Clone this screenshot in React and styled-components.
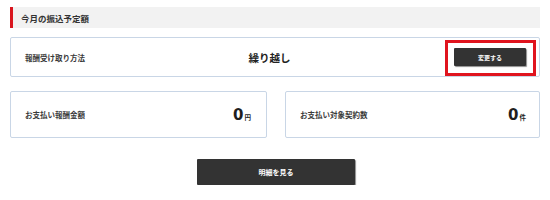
import React from "react";
import styled, { createGlobalStyle } from "styled-components";

const Global = createGlobalStyle`
  html, body { margin: 0; padding: 0; background: #fff; }
  body { font-family: "Noto Sans CJK JP", "Noto Sans", sans-serif; color: #333; }
`;

const Page = styled.div`
  width: 530px;
  padding: 7px 10px 0;
  display: flex;
  flex-direction: column;
`;

const Heading = styled.h2`
  margin: 0;
  height: 21px;
  box-sizing: border-box;
  display: flex;
  align-items: center;
  background: #f2f2f2;
  border-left: 3px solid #d9161f;
  padding-left: 8px;
  font-size: 8.5px;
  font-weight: 700;
  color: #333;
`;

const Card = styled.div`
  box-sizing: border-box;
  border: 1px solid #c9d6e6;
  border-radius: 2px;
  background: #fff;
  height: ${(p) => p.$h}px;
  display: flex;
  align-items: center;
  padding: 0 ${(p) => p.$pr || 13}px 0 14px;
  position: relative;
`;

const MethodCard = styled(Card)`
  margin-top: 9px;
  display: grid;
  grid-template-columns: 1fr auto 1fr;
`;

const Label = styled.span`
  font-size: 7.5px;
  font-weight: 700;
  color: #3a3a3a;
  flex: 1;
`;

const Value = styled.span`
  font-size: 10.5px;
  font-weight: 700;
  color: #222;
  margin-right: 12px;
`;

const ButtonCell = styled.div`
  display: flex;
  justify-content: flex-end;
`;

const Highlight = styled.div`
  position: absolute;
  right: 3px;
  top: 2px;
  width: 91px;
  height: 36px;
  box-sizing: border-box;
  border: 3.5px solid #e0141e;
  pointer-events: none;
`;

const DarkButton = styled.button`
  box-sizing: border-box;
  width: ${(p) => p.$w}px;
  height: ${(p) => p.$h}px;
  background: #333;
  color: #fff;
  border: none;
  border-radius: 1px;
  box-shadow: 1px 1px 1px rgba(0, 0, 0, 0.45);
  font-family: inherit;
  font-size: ${(p) => p.$fs}px;
  font-weight: 700;
  cursor: pointer;
  padding: 0;
`;

const Summary = styled.div`
  margin-top: 14px;
  display: grid;
  grid-template-columns: 257px 255px;
  column-gap: 18px;
`;

const Amount = styled.span`
  display: flex;
  align-items: baseline;
  color: #1e1e1e;
`;

const Num = styled.span`
  font-family: "DejaVu Sans", "Liberation Sans", sans-serif;
  font-size: 15px;
  font-weight: 700;
`;

const Unit = styled.span`
  font-size: 6.5px;
  font-weight: 700;
  margin-left: 1px;
`;

const Footer = styled.div`
  margin-top: 21px;
  display: flex;
  justify-content: center;
  padding-left: 2px;
`;

export default function App() {
  return (
    <>
      <Global />
      <Page>
        <Heading>今月の振込予定額</Heading>
        <MethodCard $h={40}>
          <Label>報酬受け取り方法</Label>
          <Value>繰り越し</Value>
          <ButtonCell>
            <DarkButton $w={72} $h={18} $fs={6}>変更する</DarkButton>
          </ButtonCell>
          <Highlight />
        </MethodCard>
        <Summary>
          <Card $h={47} $pr={15}>
            <Label>お支払い報酬金額</Label>
            <Amount>
              <Num>0</Num>
              <Unit>円</Unit>
            </Amount>
          </Card>
          <Card $h={47} $pr={13}>
            <Label>お支払い対象契約数</Label>
            <Amount>
              <Num>0</Num>
              <Unit>件</Unit>
            </Amount>
          </Card>
        </Summary>
        <Footer>
          <DarkButton $w={158} $h={26} $fs={7}>明細を見る</DarkButton>
        </Footer>
      </Page>
    </>
  );
}
